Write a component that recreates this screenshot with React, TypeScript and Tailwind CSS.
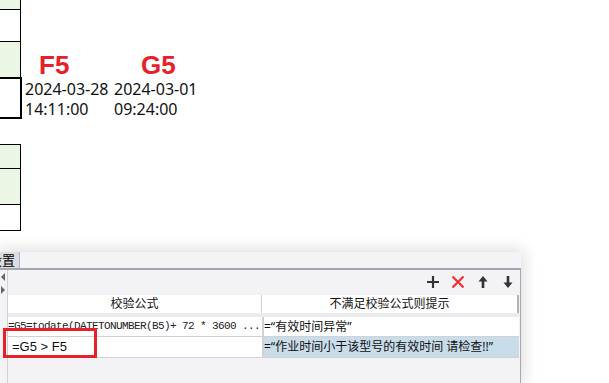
const cjk = '"Noto Sans", "Noto Sans CJK SC", sans-serif';

function PlusIcon() {
  return (
    <svg width="14" height="14" viewBox="0 0 14 14">
      <path d="M7 1v12M1 7h12" stroke="#333" strokeWidth="2.2" />
    </svg>
  );
}

function CrossIcon() {
  return (
    <svg width="14" height="14" viewBox="0 0 14 14">
      <path d="M1.5 1.5l11 11M12.5 1.5l-11 11" stroke="#e8383a" strokeWidth="2.4" />
    </svg>
  );
}

function ArrowIcon({ down = false }: { down?: boolean }) {
  return (
    <svg width="14" height="14" viewBox="0 0 14 14" className={down ? 'rotate-180' : ''}>
      <path d="M7 1L2.5 6.5h3.2V13h2.6V6.5h3.2z" fill="#333" />
    </svg>
  );
}

export default function App() {
  return (
    <div className="relative flex h-[383px] w-[609px] flex-col overflow-hidden bg-white" style={{ fontFamily: cjk }}>
      {/* sheet area */}
      <div className="flex h-[252px] shrink-0">
        <div className="flex w-[22px] shrink-0 flex-col">
          <div className="h-[10px] w-[21px] border-r border-b border-black bg-[#ebf7e4]" />
          <div className="h-[32px] w-[21px] border-r border-b border-black bg-white" />
          <div className="h-[35px] w-[21px] border-r border-black bg-[#ebf7e4]" />
          <div className="h-[42px] w-[22px] border-y-2 border-r-2 border-black bg-white" />
          <div className="h-[25px]" />
          <div className="h-[24px] w-[21px] border-t border-r border-black bg-[#ebf7e4]" />
          <div className="h-[36px] w-[21px] border-t border-r border-black bg-[#ebf7e4]" />
          <div className="h-[27px] w-[21px] border-y border-r border-black bg-white" />
        </div>

        <div className="flex pt-[51px] pl-[3px] text-[16px] leading-[20px] text-[#111]">
          <div className="w-[89px]">
            <div className="ml-[14px] text-[26px] leading-[28px] font-bold text-[#e8202a]" style={{ fontFamily: '"Liberation Sans", sans-serif' }}>F5</div>
            <div>2024-03-28</div>
            <div>14:11:00</div>
          </div>
          <div>
            <div className="ml-[27px] text-[26px] leading-[28px] font-bold text-[#e8202a]" style={{ fontFamily: '"Liberation Sans", sans-serif' }}>G5</div>
            <div>2024-03-01</div>
            <div>09:24:00</div>
          </div>
        </div>
      </div>

      {/* settings panel */}
      <div className="flex w-[521px] flex-1 flex-col bg-[#f3f3f6] shadow-[0_0_14px_3px_rgba(0,0,0,0.13)]">
        <div className="flex h-[18px] shrink-0 border-b-2 border-[#a2a8b1] bg-[#f4f4f7]">
          <div className="flex h-[16px] w-[20px] justify-end overflow-hidden border-r border-[#a8b6ca] bg-[#dcdde2] pr-[4px] text-[13px] leading-[16px] text-black">
            <span className="whitespace-nowrap">设置</span>
          </div>
        </div>

        <div className="flex flex-1">
          <div className="flex w-[8px] shrink-0 flex-col gap-[5px] border-r border-[#d2d2d6] pt-[3px] pl-[1px]">
            <div className="h-0 w-0 border-y-[4px] border-r-[4px] border-y-transparent border-r-[#666]" />
            <div className="h-0 w-0 border-y-[4px] border-l-[4px] border-y-transparent border-l-[#666]" />
          </div>

          <div className="flex flex-1 flex-col border-r border-[#a9a9ad]">
            <div className="flex h-[24px] items-center justify-end gap-[11px] pr-[5px]">
              <PlusIcon />
              <CrossIcon />
              <ArrowIcon />
              <ArrowIcon down />
            </div>

            <div className="mt-[1px] flex w-[511px] flex-col text-[12px] text-[#111]">
              <div className="flex h-[18px] bg-white leading-[18px]">
                <div className="w-[254px] border-r border-[#d0d0d0] text-center">校验公式</div>
                <div className="flex-1 border-r-2 border-[#b4b4b4] text-center">不满足校验公式则提示</div>
              </div>
              <div className="h-[4px] bg-[#ebebee]" />
              <div className="flex flex-col gap-[1px] border-b border-[#d2d2d2] bg-[#d2d2d2]">
                <div className="flex h-[19px] gap-[2px] leading-[19px]">
                  <div
                    className="w-[254px] overflow-hidden bg-white text-[11px] tracking-[-0.6px] whitespace-nowrap text-[#222]"
                    style={{ fontFamily: '"Liberation Mono", monospace' }}
                  >
                    =G5=todate(DATETONUMBER(B5)+ 72 * 3600 ...
                  </div>
                  <div className="flex-1 bg-white">=“有效时间异常”</div>
                </div>
                <div className="flex h-[20px] gap-[2px] leading-[20px]">
                  <div className="w-[254px] bg-white pl-[4px] text-[13px]" style={{ fontFamily: '"Liberation Sans", sans-serif' }}>=G5 &gt; F5</div>
                  <div className="flex-1 whitespace-nowrap bg-[#c9dcea]">=“作业时间小于该型号的有效时间 请检查!!”</div>
                </div>
              </div>
            </div>
          </div>
        </div>
      </div>

      {/* highlight annotation */}
      <div className="absolute top-[328px] left-[3px] h-[30px] w-[94px] border-[3px] border-[#e8202a]" />
    </div>
  );
}
